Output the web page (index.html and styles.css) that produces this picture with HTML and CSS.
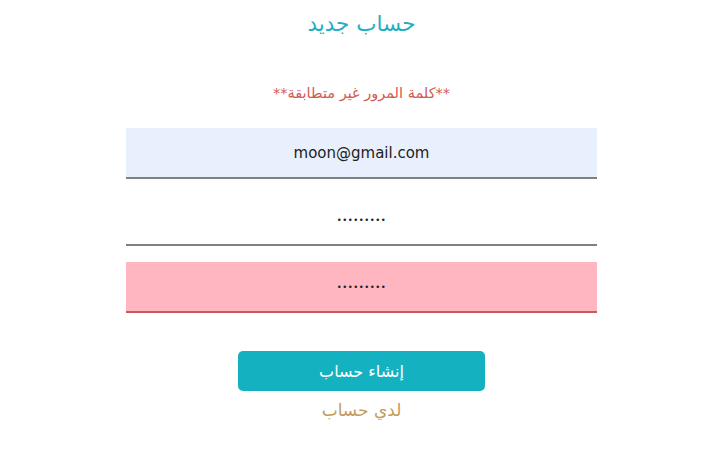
FILE: index.html
```html
<!DOCTYPE html>
<html lang="ar" dir="rtl">
<head>
<meta charset="utf-8">
<link rel="stylesheet" href="styles.css">
</head>
<body>
<div class="page">
  <form class="form">
    <h1 class="title">حساب جديد</h1>
    <p class="error">**كلمة المرور غير متطابقة**</p>
    <input class="field field-filled" type="email" value="moon@gmail.com" dir="ltr">
    <input class="field field-secret" type="password" value="123456789">
    <input class="field field-secret field-invalid" type="password" value="123456789">
    <button class="btn" type="button">إنشاء حساب</button>
    <a class="link" href="#">لدي حساب</a>
  </form>
</div>
</body>
</html>
```
FILE: styles.css
```css
html, body {
  margin: 0;
  background: #fff;
}
body {
  font-family: "DejaVu Sans", "Noto Sans", sans-serif;
}
.page {
  padding-left: 20px;
}
.form {
  width: 471px;
  margin: 0 auto;
  display: flex;
  flex-direction: column;
  align-items: center;
}
.title {
  margin: 9px 0 0;
  font-size: 21.5px;
  font-weight: normal;
  color: #1fb0c2;
  line-height: 30px;
}
.error {
  margin: 44px 0 0;
  font-size: 14.5px;
  color: #d25a50;
  line-height: 20px;
}
.field {
  box-sizing: border-box;
  width: 100%;
  height: 51px;
  border: none;
  border-bottom: 2px solid #808080;
  background: #fff;
  text-align: center;
  font-family: "DejaVu Sans", sans-serif;
  font-size: 15px;
  color: #222;
  outline: none;
  padding: 0;
}
.field-secret {
  font-size: 8.5px;
  letter-spacing: 0.5px;
}
.field-filled {
  margin-top: 25px;
  background: #e8f0fe;
}
.field + .field {
  margin-top: 16px;
}
.field-invalid {
  background: #ffb6c1;
  border-bottom-color: #c85a5a;
}
.btn {
  margin-top: 38px;
  width: 247px;
  height: 40px;
  border: none;
  border-radius: 5px;
  background: #14b2c0;
  color: #fff;
  font-family: "DejaVu Sans", sans-serif;
  font-size: 16px;
}
.link {
  margin-top: 9px;
  font-size: 17px;
  color: #c49a5c;
  text-decoration: none;
}
```
